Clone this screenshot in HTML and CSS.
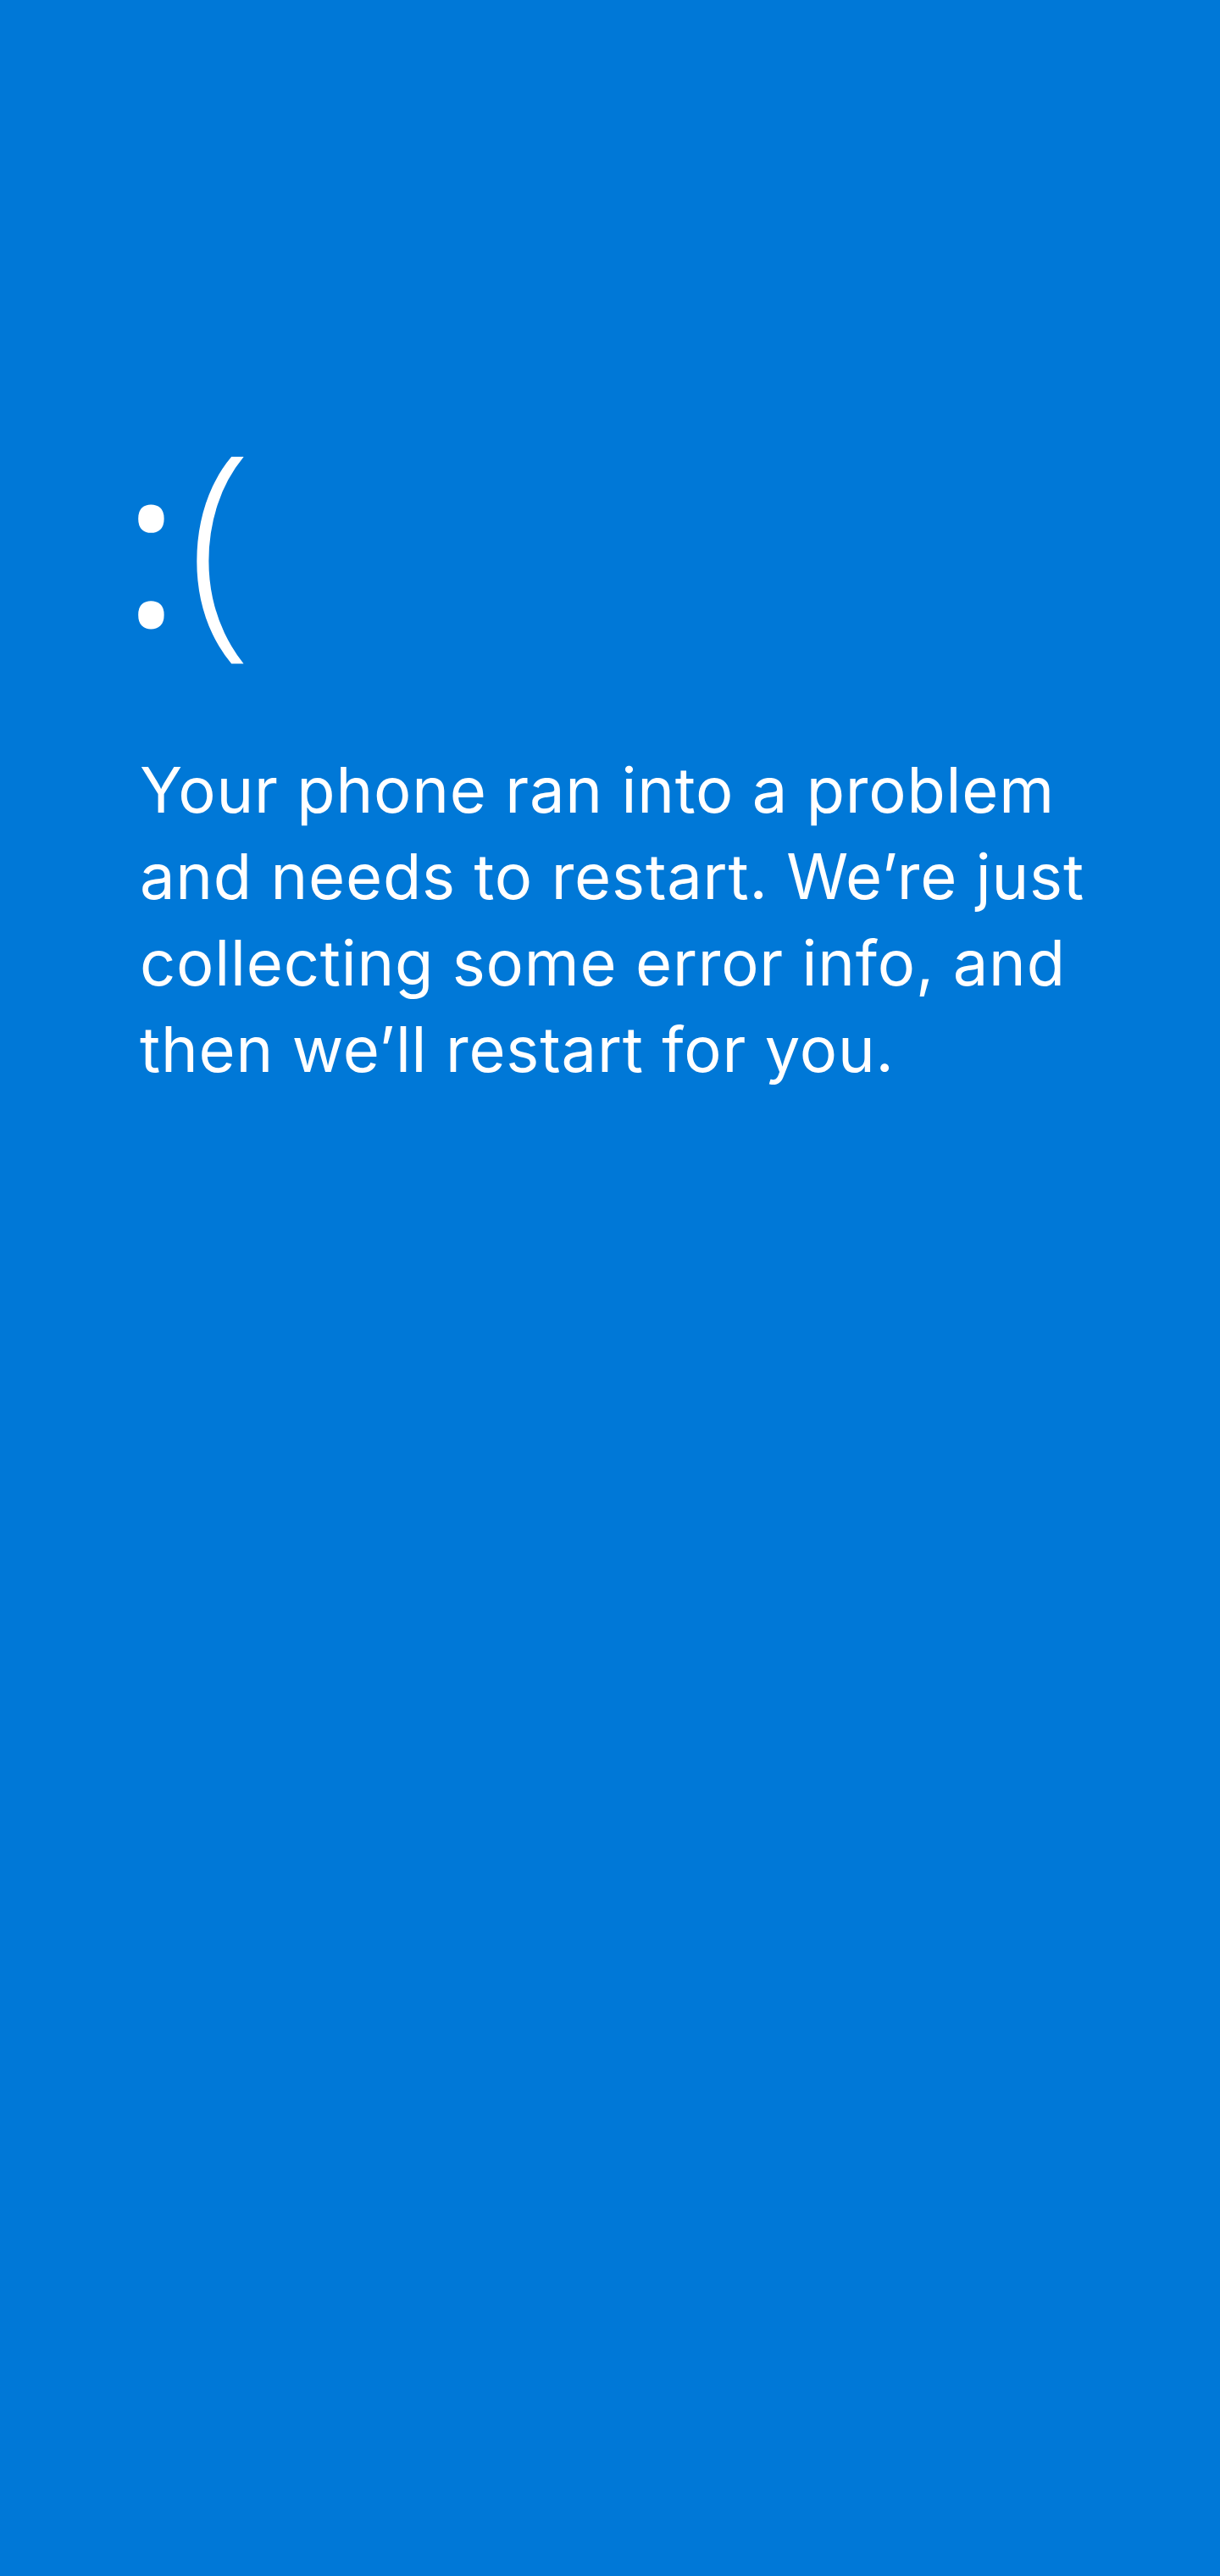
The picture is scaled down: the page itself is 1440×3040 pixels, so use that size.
FILE: index.html
```html
<!DOCTYPE html>
<html lang="en">
<head>
<meta charset="utf-8">
<title>Your phone ran into a problem</title>
<link rel="stylesheet" href="styles.css">
</head>
<body>
<main class="screen">
  <div class="face"><span class="face-colon">:</span><span class="face-paren">(</span></div>
  <p class="message">Your phone ran into a problem and needs to restart. We’re just collecting some error info, and then we’ll restart for you.</p>
</main>
</body>
</html>
```

FILE: styles.css
```css
html, body {
  margin: 0;
  padding: 0;
  background: #0078d7;
}

.screen {
  box-sizing: border-box;
  min-height: 3040px;
  padding: 491px 0 0 165px;
  color: #ffffff;
  font-family: "Inter", "Open Sans", sans-serif;
}

.face {
  display: flex;
  align-items: baseline;
  margin-left: -21px;
  font-family: "Open Sans", sans-serif;
  font-weight: 300;
  line-height: 1;
}

.face-colon {
  font-size: 262px;
  font-weight: 400;
}

.face-paren {
  font-size: 280px;
  margin-left: 8px;
}

.message {
  margin: 110px 0 0 0;
  max-width: 1150px;
  font-size: 74px;
  line-height: 102px;
  letter-spacing: 0.8px;
  font-weight: 400;
}
```
